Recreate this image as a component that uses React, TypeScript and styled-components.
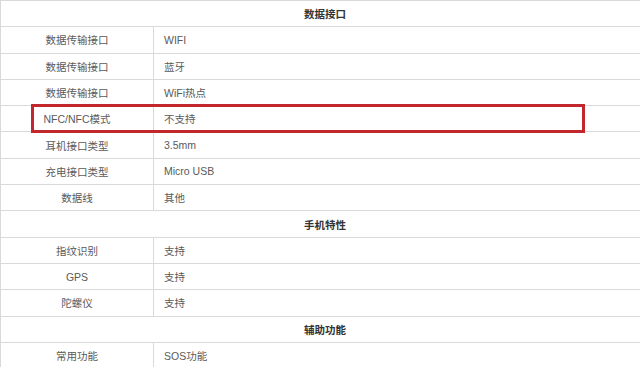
import React from "react";
import styled, { createGlobalStyle } from "styled-components";

const Global = createGlobalStyle`
  html, body { margin: 0; padding: 0; background: #fff; overflow: hidden; }
  body { font-family: "Liberation Sans", "Noto Sans CJK SC", sans-serif; }
`;

const Page = styled.div`
  position: relative;
  width: 640px;
  height: 367px;
  overflow: hidden;
`;

const Table = styled.table`
  width: 650px;
  border-collapse: collapse;
  table-layout: fixed;
  font-size: 10.5px;
`;

const Row = styled.tr`
  height: 26.3px;
`;

const HeadCell = styled.td`
  border: 1px solid #d9d9d9;
  text-align: center;
  color: #333;
  font-weight: bold;
  padding: 0;
`;

const LabelCell = styled.td`
  border: 1px solid #d9d9d9;
  text-align: center;
  color: #5a5a5a;
  padding: 0;
`;

const ValueCell = styled.td`
  border: 1px solid #d9d9d9;
  text-align: left;
  color: #5a5a5a;
  padding: 0 0 0 10px;
`;

const Highlight = styled.div`
  position: absolute;
  left: 31px;
  top: 104px;
  width: 554px;
  height: 29px;
  box-sizing: border-box;
  border: 3px solid #c1272d;
  pointer-events: none;
`;

type Item = { head: string } | { label: string; value: string };

const items: Item[] = [
  { head: "数据接口" },
  { label: "数据传输接口", value: "WIFI" },
  { label: "数据传输接口", value: "蓝牙" },
  { label: "数据传输接口", value: "WiFi热点" },
  { label: "NFC/NFC模式", value: "不支持" },
  { label: "耳机接口类型", value: "3.5mm" },
  { label: "充电接口类型", value: "Micro USB" },
  { label: "数据线", value: "其他" },
  { head: "手机特性" },
  { label: "指纹识别", value: "支持" },
  { label: "GPS", value: "支持" },
  { label: "陀螺仪", value: "支持" },
  { head: "辅助功能" },
  { label: "常用功能", value: "SOS功能" },
];

export default function App() {
  return (
    <Page>
      <Global />
      <Table>
        <colgroup>
          <col style={{ width: 153 }} />
          <col />
        </colgroup>
        <tbody>
          {items.map((it, i) =>
            "head" in it ? (
              <Row key={i}>
                <HeadCell colSpan={2}>{it.head}</HeadCell>
              </Row>
            ) : (
              <Row key={i}>
                <LabelCell>{it.label}</LabelCell>
                <ValueCell>{it.value}</ValueCell>
              </Row>
            )
          )}
        </tbody>
      </Table>
      <Highlight />
    </Page>
  );
}
